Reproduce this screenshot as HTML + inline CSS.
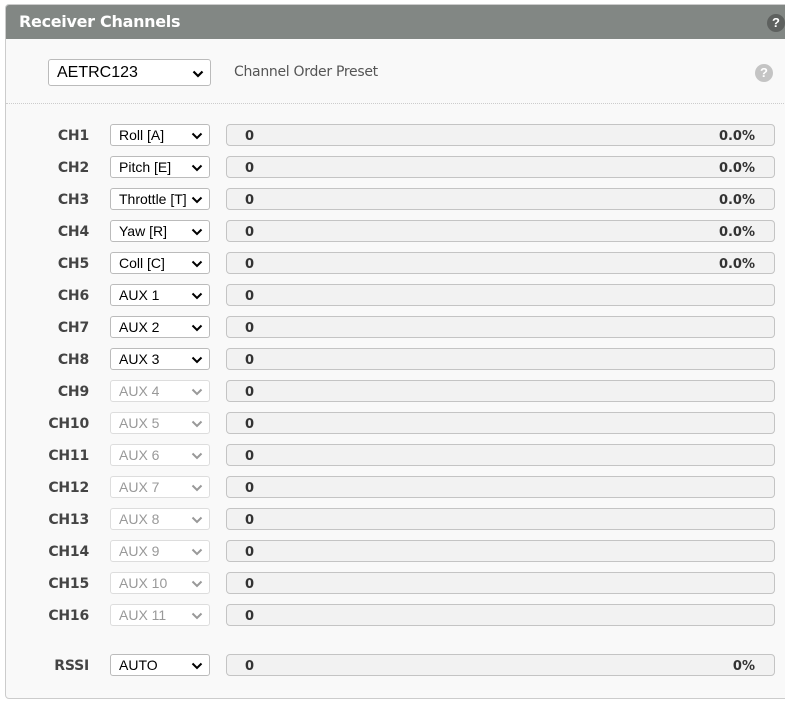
<!DOCTYPE html>
<html><head><style>
*{box-sizing:border-box;margin:0;padding:0}
body{width:785px;height:702px;background:#fff;position:relative;overflow:hidden;font-family:"Liberation Sans",sans-serif}
.panel{position:absolute;left:5px;top:4px;width:800px;height:695px;border:1px solid #ccc;border-radius:4px;background:#f9f9f9;overflow:hidden}
.hdr{position:absolute;left:0;top:0;right:0;height:34px;background:#828784}
.hdr span{position:absolute;left:13px;top:7px;color:#fff;font-weight:bold;font-size:16px;font-family:"DejaVu Sans",sans-serif;letter-spacing:-0.3px}
.help{position:absolute;width:18px;height:18px;border-radius:50%;color:#fff;font-size:13px;font-weight:bold;text-align:center;line-height:18px}
.sel{position:absolute;background:#fff;border:1px solid #bbb;border-radius:3px;font-size:14px;color:#000;padding-left:8px;line-height:21px}
.sel.dis{color:#999;border-color:#ddd}
.sel svg{position:absolute;right:6px;top:7px}
.lbl{position:absolute;width:60px;left:29px;text-align:right;font-weight:bold;font-size:14px;color:#444;font-family:"DejaVu Sans",sans-serif;letter-spacing:-0.2px}
.bar{position:absolute;left:226px;width:549px;height:22px;background:#f2f2f2;border:1px solid #c4c4c4;border-radius:4px;font-weight:bold;font-size:13px;color:#333;font-family:"DejaVu Sans",sans-serif}
.bar .v{position:absolute;left:18px;top:4px}
.bar .p{position:absolute;right:19px;top:4px}
</style></head><body>
<div class="panel">
<div class="hdr"><span>Receiver Channels</span></div>
<div class="help" style="left:761px;top:9px;background:#5e615f">?</div>
<div class="help" style="left:749px;top:59px;background:#c4c4c4">?</div>
<div class="sel" style="left:42px;top:54px;width:163px;height:27px;font-size:16px;line-height:25px">AETRC123<svg width="12" height="8" style="top:10px" viewBox="0 0 12 8"><path d="M1.5 1.5 L6 6 L10.5 1.5" stroke="#000" stroke-width="2.2" fill="none"/></svg></div>
<div style="position:absolute;left:228px;top:59px;font-size:14px;color:#555;font-family:'DejaVu Sans',sans-serif;letter-spacing:-0.3px">Channel Order Preset</div>
<div style="position:absolute;left:0;right:0;top:98px;border-top:1px dotted #ccc"></div>
</div>
<div id="rows"></div>
<script>
var names=["Roll [A]","Pitch [E]","Throttle [T]","Yaw [R]","Coll [C]","AUX 1","AUX 2","AUX 3","AUX 4","AUX 5","AUX 6","AUX 7","AUX 8","AUX 9","AUX 10","AUX 11"];
var h="";
function row(y,l,n,dis,pct){
 var c=dis?"#999":"#000";
 h+='<div class="lbl" style="top:'+(y-7)+'px">'+l+'</div>';
 h+='<div class="sel'+(dis?' dis':'')+'" style="left:110px;top:'+(y-11)+'px;width:100px;height:22px">'+n+'<svg width="12" height="8" viewBox="0 0 12 8"><path d="M1.5 1.5 L6 6 L10.5 1.5" stroke="'+c+'" stroke-width="2" fill="none"/></svg></div>';
 h+='<div class="bar" style="top:'+(y-11)+'px"><span class="v">0</span>'+(pct?'<span class="p">'+pct+'</span>':'')+'</div>';
}
for(var i=0;i<16;i++)row(135+32*i,"CH"+(i+1),names[i],i>=8,i<5?"0.0%":"");
row(665,"RSSI","AUTO",false,"0%");
document.getElementById("rows").innerHTML=h;
</script>
</body></html>
